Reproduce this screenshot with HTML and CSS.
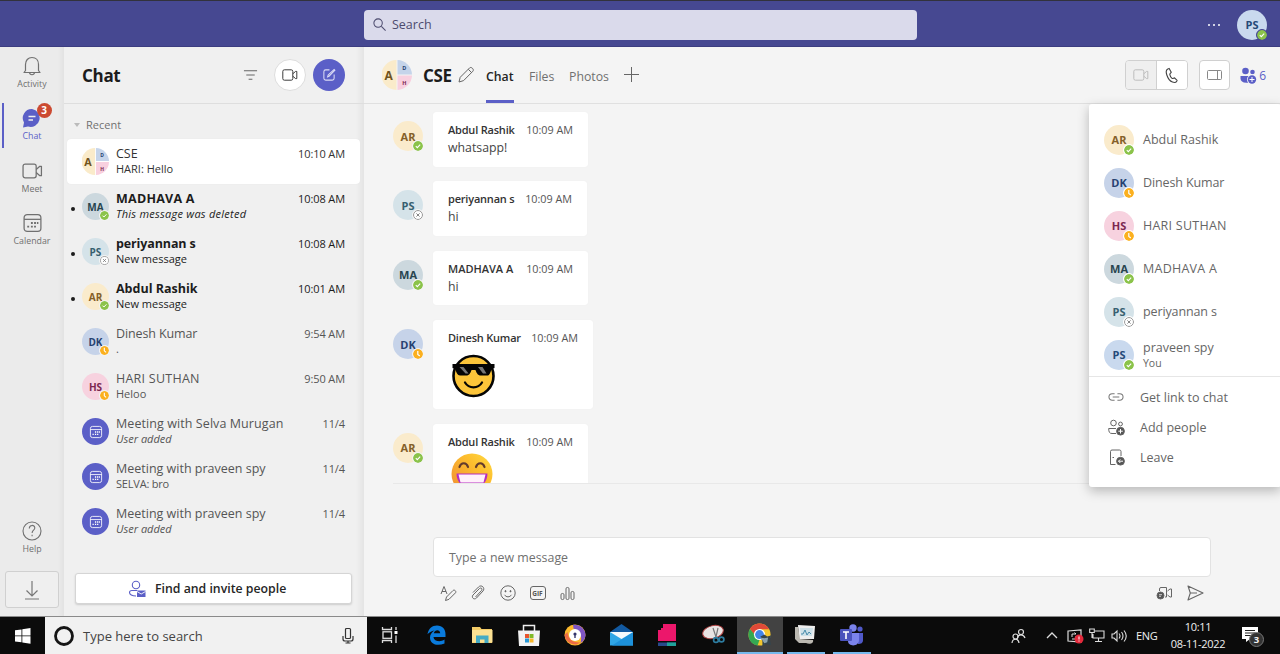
FILE: index.html
```html
<!DOCTYPE html>
<html lang="en">
<head>
<meta charset="utf-8">
<title>CSE | Chat</title>
<link rel="stylesheet" href="styles.css">
</head>
<body>
<svg class="defs" width="0" height="0" aria-hidden="true">
  <symbol id="calendar" viewBox="0 0 20 20"><rect x="2" y="2" width="16" height="16" rx="3" fill="none" stroke="currentColor" stroke-width="1.2"/><path d="M2 6.500h16" stroke="currentColor" stroke-width="1.2"/><path d="M8.500 10h1.800M11.500 10h1.800M14.200 10h1.400M5 13.500h1.800M8.500 13.500h1.800M11.500 13.500h1.800" stroke="currentColor" stroke-width="1.800"/></symbol>
  <symbol id="video" viewBox="0 0 20 20"><rect x="1" y="3.500" width="12.500" height="13" rx="2" fill="none" stroke="currentColor" stroke-width="1.200"/><path d="M13.500 8.500L17 5.500h1.500v9H17l-3.500-3" fill="none" stroke="currentColor" stroke-width="1.200" stroke-linejoin="round"/></symbol>
  <symbol id="ok" viewBox="0 0 10 10"><circle cx="5" cy="5" r="5" fill="#8bc34a"/><path d="M2.800 5.200l1.500 1.500 2.900-3" fill="none" stroke="#fff" stroke-width="1.100"/></symbol>
  <symbol id="away" viewBox="0 0 10 10"><circle cx="5" cy="5" r="5" fill="#fbb01f"/><path d="M4.800 2v3.400l2 1.600" fill="none" stroke="#fff" stroke-width="1.200"/></symbol>
  <symbol id="off" viewBox="0 0 10 10"><circle cx="5" cy="5" r="4.500" fill="#fff" stroke="#858585" stroke-width=".9"/><path d="M3.400 3.400l3.200 3.200M6.600 3.400L3.400 6.600" stroke="#777" stroke-width=".9"/></symbol>
</svg>

<header class="titlebar">
  <div class="search"><svg width="15" height="15" viewBox="0 0 16 16" fill="none" stroke="#4c4b6e" stroke-width="1.100"><circle cx="6.500" cy="6.500" r="4.500"/><path d="M10 10l4.500 4.500"/></svg><span>Search</span></div>
  <div class="title-right"><span class="dots"><i></i><i></i><i></i></span><span class="av me big">PS<svg class="st dark"><use href="#ok"/></svg></span></div>
</header>

<div class="app">
  <nav class="rail">
    <div class="rail-item"><svg width="22" height="22" viewBox="0 0 22 22" fill="none" stroke="currentColor" stroke-width="1.200" stroke-linejoin="round"><path d="M4.500 15.500V9.500C4.500 5.500 7 2.500 11 2.500s6.500 3 6.500 7v6l1.500 2H3z"/><path d="M8.500 17.500c.3 3 4.700 3 5 0"/></svg><span>Activity</span></div>
    <div class="rail-item on"><svg width="22" height="22" viewBox="0 0 22 22"><path d="M11 2a9 9 0 1 1-4 17.500L2 20.500l1-5A9 9 0 0 1 11 2z" fill="#5b5fc7"/><path d="M7.500 9.500h7M7.500 13h4.500" stroke="#eee" stroke-width="1.300"/></svg><span>Chat</span><b class="badge">3</b></div>
    <div class="rail-item"><svg width="21" height="21"><use href="#video"/></svg><span>Meet</span></div>
    <div class="rail-item"><svg width="21" height="21"><use href="#calendar"/></svg><span>Calendar</span></div>
    <div class="rail-item help"><svg width="22" height="22" viewBox="0 0 22 22" fill="none" stroke="currentColor" stroke-width="1.100"><circle cx="11" cy="11" r="9"/><path d="M8.300 8.500c0-4 5.500-4 5.500-.6 0 2.300-2.700 2.300-2.700 5M11.100 14.700v1.500"/></svg><span>Help</span></div>
    <div class="download"><svg width="20" height="22" viewBox="0 0 20 22" fill="none" stroke="#777" stroke-width="1.200"><path d="M10 2v15M4.500 11.500L10 17l5.500-5.500M3 20h14"/></svg></div>
  </nav>

  <aside class="list">
    <div class="list-head"><h1>Chat</h1>
      <svg class="filter" width="15" height="14" viewBox="0 0 16 14" stroke="#666" stroke-width="1.100"><path d="M1 2.500h14M3.500 7h9M6 11.500h4"/></svg>
      <span class="round white"><svg width="16" height="16"><use href="#video"/></svg></span>
      <span class="round purple"><svg width="14" height="14" viewBox="0 0 15 15" fill="none" stroke="#dcdcf5" stroke-width="1.100"><path d="M8 2H4Q2 2 2 4v7q0 2 2 2h7q2 0 2-2V7M6 9.500l.6-2L13 1.500l.8.8-6.300 6.500z"/></svg></span>
    </div>
    <div class="recent"><svg width="6" height="4" viewBox="0 0 6 4"><path d="M0 0h6L3 4z" fill="#bbb"/></svg>Recent</div>
    <div class="rows">
      <div class="row sel"><svg class="gav" viewBox="0 0 30 30"><path d="M14.500 0a15 15 0 0 0 0 30z" fill="#faebca"/><path d="M15.500 0A15 15 0 0 1 30 14.500H15.500z" fill="#c5d4ea"/><path d="M15.500 15.500H30A15 15 0 0 1 15.500 30z" fill="#f8d0df"/><text x="2.500" y="19.500" class="ga">A</text><text x="20.300" y="10" class="gd">D</text><text x="20.300" y="25" class="gh">H</text></svg><div class="rt"><p><span class="nm">CSE</span><time>10:10 AM</time></p><p class="sub">HARI: Hello</p></div></div>
      <div class="row unread"><span class="av ma">MA<svg class="st"><use href="#ok"/></svg></span><div class="rt"><p><span class="nm wide">MADHAVA A</span><time>10:08 AM</time></p><p class="sub"><em class="deleted">This message was deleted</em></p></div></div>
      <div class="row unread"><span class="av pe">PS<svg class="st"><use href="#off"/></svg></span><div class="rt"><p><span class="nm tight">periyannan s</span><time>10:08 AM</time></p><p class="sub">New message</p></div></div>
      <div class="row unread"><span class="av ar">AR<svg class="st"><use href="#ok"/></svg></span><div class="rt"><p><span class="nm">Abdul Rashik</span><time>10:01 AM</time></p><p class="sub">New message</p></div></div>
      <div class="row"><span class="av dk">DK<svg class="st"><use href="#away"/></svg></span><div class="rt"><p><span class="nm tight">Dinesh Kumar</span><time>9:54 AM</time></p><p class="sub">.</p></div></div>
      <div class="row"><span class="av hs">HS<svg class="st"><use href="#away"/></svg></span><div class="rt"><p><span class="nm wide">HARI SUTHAN</span><time>9:50 AM</time></p><p class="sub">Heloo</p></div></div>
      <div class="row"><span class="av cal"><svg width="14" height="14"><use href="#calendar"/></svg></span><div class="rt"><p><span class="nm meet">Meeting with Selva Murugan</span><time>11/4</time></p><p class="sub"><em>User added</em></p></div></div>
      <div class="row"><span class="av cal"><svg width="14" height="14"><use href="#calendar"/></svg></span><div class="rt"><p><span class="nm">Meeting with praveen spy</span><time>11/4</time></p><p class="sub selva">SELVA: bro</p></div></div>
      <div class="row"><span class="av cal"><svg width="14" height="14"><use href="#calendar"/></svg></span><div class="rt"><p><span class="nm">Meeting with praveen spy</span><time>11/4</time></p><p class="sub"><em>User added</em></p></div></div>
    </div>
    <div class="invite"><svg width="18" height="18" viewBox="0 0 18 18"><circle cx="8" cy="5" r="3.700" fill="none" stroke="#5b5fc7" stroke-width="1.100"/><path d="M8 16C4 16 1.500 14.500 1.500 12.500S2.500 10.500 4 10.500h5" fill="none" stroke="#5b5fc7" stroke-width="1.100"/><path d="M9 10.500h8.500V17H9z" fill="#5b5fc7"/><path d="M9 11.500l4.200 2.500 4.300-2.500" fill="none" stroke="#fff" stroke-width=".9"/></svg><span>Find and invite people</span></div>
  </aside>

  <main class="main">
    <div class="main-head">
      <svg class="gav" viewBox="0 0 30 30"><path d="M14.500 0a15 15 0 0 0 0 30z" fill="#faebca"/><path d="M15.500 0A15 15 0 0 1 30 14.500H15.500z" fill="#c5d4ea"/><path d="M15.500 15.500H30A15 15 0 0 1 15.500 30z" fill="#f8d0df"/><text x="2.500" y="19.500" class="ga">A</text><text x="20.300" y="10" class="gd">D</text><text x="20.300" y="25" class="gh">H</text></svg>
      <h2>CSE</h2>
      <svg class="pencil" width="18" height="18" viewBox="0 0 18 18" fill="none" stroke="#666" stroke-linejoin="round"><path d="M2 16l1.200-4.700 9.400-9.400c1.600-1.500 4.900 1.500 3.300 3.300l-9.300 9.400zM11.300 3.300l3.400 3.400"/></svg>
      <span class="tab on">Chat</span><span class="tab files">Files</span><span class="tab photos">Photos</span>
      <svg class="add" width="15" height="15" viewBox="0 0 15 15" stroke="#666"><path d="M7.500 0v15M0 7.500h15"/></svg>
      <div class="tools">
        <span class="seg"><span class="dis"><svg width="16" height="16"><use href="#video"/></svg></span><span><svg width="16" height="17" viewBox="0 0 17 18" fill="none" stroke="#444" stroke-width="1.200" stroke-linejoin="round"><path d="M5.500 1.500L4 2C2 3 2 5.500 3 8.500s3 6.500 6 7.500c2 .8 3.800.4 4.700-1.200l.2-.7-2.700-2.600c-1.200.2-1.700 1.100-2.700.5C7.300 11 6.500 9.500 6.200 8c-.2-1.200 1-1.500 1.500-2.500z"/></svg></span></span>
        <span class="btn"><svg width="17" height="12" viewBox="0 0 17 12" fill="none" stroke="#888"><rect x="1.500" y="1.500" width="14" height="9" rx="1"/><path d="M11.500 1.500v9"/></svg></span>
        <span class="people"><svg width="17" height="17" viewBox="0 0 17 17" fill="#5b5fc7"><circle cx="5.500" cy="4" r="3.300"/><circle cx="12.500" cy="5" r="2.300"/><path d="M.5 9h9v6.500c-6 1-9-.8-9-4z"/><circle cx="12" cy="12.500" r="5" fill="#f5f5f5"/><circle cx="12" cy="12.500" r="4.200"/><path d="M12 10v5M9.500 12.500h5" stroke="#fff"/></svg>6</span>
      </div>
    </div>
    <div class="thread">
      <div class="msg"><span class="av big ar">AR<svg class="st"><use href="#ok"/></svg></span><div class="bub w155"><p><b>Abdul Rashik</b><time>10:09 AM</time></p><p class="tx">whatsapp!</p></div></div>
      <div class="msg"><span class="av big pe">PS<svg class="st"><use href="#off"/></svg></span><div class="bub w154"><p><b>periyannan s</b><time>10:09 AM</time></p><p class="tx">hi</p></div></div>
      <div class="msg"><span class="av big ma">MA<svg class="st"><use href="#ok"/></svg></span><div class="bub w155"><p><b class="caps">MADHAVA A</b><time>10:09 AM</time></p><p class="tx">hi</p></div></div>
      <div class="msg"><span class="av big dk">DK<svg class="st"><use href="#away"/></svg></span><div class="bub w160 tall"><p><b>Dinesh Kumar</b><time>10:09 AM</time></p>
        <svg class="emo cool" width="46" height="46" viewBox="0 0 46 46"><circle cx="22.500" cy="23" r="20" fill="#fcc53a" stroke="#050505" stroke-width="2.600"/><path d="M1.500 11h42v4l-3 1c-1 4-2.500 6.500-3.500 6.500h-8c-2.500 0-4-4-4.500-5.500h-4C20 18.500 18.500 22.500 16 22.500H9c-2.500 0-4-3-4.500-6.500l-3-1z" fill="#050505"/><path d="M8.500 14h4l5 6.500h-3zM27 14h4.500l4 6.500h-3.500z" fill="#777"/><path d="M14 29.500c4 6.500 13 6.500 17 0" fill="none" stroke="#050505" stroke-width="2.300" stroke-linecap="round"/></svg></div></div>
      <div class="msg"><span class="av big ar">AR<svg class="st"><use href="#ok"/></svg></span><div class="bub w155 tall"><p><b>Abdul Rashik</b><time>10:09 AM</time></p>
        <svg class="emo grin" width="42" height="42" viewBox="0 0 42 42"><defs><linearGradient id="face" x1="0" y1="1" x2="1" y2="0"><stop offset="0" stop-color="#f08a32"/><stop offset=".65" stop-color="#fdbf2e"/><stop offset="1" stop-color="#ffdc44"/></linearGradient></defs><circle cx="21" cy="21" r="20.500" fill="url(#face)"/><path d="M8.500 14c1.500-5 7-5 8.500 0M25 14c1.500-5 7-5 8.500 0" fill="none" stroke="#643b2c" stroke-width="2.200" stroke-linecap="round"/><path d="M5.500 20.500h31c0 20-31 20-31 0z" fill="#b52dc0"/><path d="M7.500 21.500h27l-2 8H9.500z" fill="#fff0fb"/></svg></div></div>
    </div>
    <div class="compose">
      <div class="input">Type a new message</div>
      <div class="cicons">
        <svg width="17" height="17" viewBox="0 0 17 17" fill="none" stroke="#666" stroke-linejoin="round"><path d="M1 9L4 1.500 7 9M2 6.500h4M5.500 15.500l1-3.500 6.500-6.500c1.300-1.200 3.700.7 2.500 2.300L9 14.300z"/></svg>
        <svg width="15" height="16" viewBox="0 0 15 16" fill="none" stroke="#666"><path d="M2 7.500L7.500 2c3-3 7 1 4.500 4l-6.500 7c-2.500 2.300-5.500-.5-3.500-3l6.500-6.500c1.700-1.300 3.300.3 2 2L4.500 12"/></svg>
        <svg width="16" height="16" viewBox="0 0 16 16" fill="none" stroke="#666"><circle cx="8" cy="8" r="7.200"/><path d="M4.500 9.800c1.700 2.700 5.300 2.700 7 0"/><circle cx="5.500" cy="6.200" r=".6" fill="#555"/><circle cx="10.500" cy="6.200" r=".6" fill="#555"/></svg>
        <svg width="16" height="14" viewBox="0 0 16 14"><rect x=".5" y=".5" width="15" height="13" rx="2.500" fill="none" stroke="#666"/><text x="2.200" y="9.700" class="gif">GIF</text></svg>
        <svg width="15" height="15" viewBox="0 0 14 15" fill="none" stroke="#666"><rect x=".5" y="7.500" width="3" height="6" rx="1.300"/><rect x="5.500" y="1.500" width="3" height="12" rx="1.300"/><rect x="10.500" y="5.500" width="3" height="8" rx="1.300"/></svg>
        <svg class="clip" width="17" height="14" viewBox="0 0 17 14" fill="none" stroke="#666"><path d="M3.500 5V3q0-1.500 1.500-1.500h5.500V11H9M11.500 5l2.500-2h1.500v8H14l-2.500-2"/><circle cx="4.500" cy="9.500" r="3.500" fill="#555"/><path d="M3 8.700h3M3 10.300h2" stroke="#eee" stroke-width=".8"/></svg>
        <svg width="17" height="16" viewBox="0 0 17 16" fill="none" stroke="#666" stroke-width="1.100" stroke-linejoin="round"><path d="M1 1l15 7-15 7 2.300-7zM3.300 8H10"/></svg>
      </div>
    </div>
  </main>

  <section class="panel">
    <div class="person"><span class="av big ar">AR<svg class="st"><use href="#ok"/></svg></span><span>Abdul Rashik</span></div>
    <div class="person"><span class="av big dk">DK<svg class="st"><use href="#away"/></svg></span><span class="tight">Dinesh Kumar</span></div>
    <div class="person"><span class="av big hs">HS<svg class="st"><use href="#away"/></svg></span><span class="wide">HARI SUTHAN</span></div>
    <div class="person"><span class="av big ma">MA<svg class="st"><use href="#ok"/></svg></span><span class="wide">MADHAVA A</span></div>
    <div class="person"><span class="av big pe">PS<svg class="st"><use href="#off"/></svg></span><span class="tight">periyannan s</span></div>
    <div class="person"><span class="av big me">PS<svg class="st"><use href="#ok"/></svg></span><span>praveen spy<small>You</small></span></div>
    <div class="actions">
      <div><svg width="16" height="16" viewBox="0 0 17 17" fill="none" stroke="#777" stroke-width="1.100"><path d="M7 5H4.500a3.500 3.500 0 0 0 0 7H7M10 5h2.500a3.500 3.500 0 0 1 0 7H10M5 8.500h7"/></svg><span>Get link to chat</span></div>
      <div><svg width="17" height="17" viewBox="0 0 17 17" fill="none" stroke="#666"><circle cx="5.500" cy="4" r="2.800"/><circle cx="12.500" cy="5" r="1.900"/><path d="M8 14.500H4C1.500 14.500.7 13 .7 9.500H8"/><circle cx="12.500" cy="12.200" r="3.900" fill="#555"/><path d="M12.500 10v4.500M10.300 12.200h4.500" stroke="#fff"/></svg><span>Add people</span></div>
      <div><svg width="17" height="17" viewBox="0 0 17 17" fill="none" stroke="#666"><path d="M7.500 15.500h-5v-13q0-1.500 1.500-1.500h7.500q1.500 0 1.500 1.500V7M4.500 8.500h1.500"/><circle cx="12.500" cy="12.200" r="3.900" fill="#555"/><path d="M15 12.200h-4.500m1.800-1.800l-1.800 1.800 1.800 1.800" stroke="#fff"/></svg><span>Leave</span></div>
    </div>
  </section>
</div>

<footer class="taskbar">
  <div class="start"><svg width="16" height="16" viewBox="0 0 16 16" fill="#fff"><path d="M0 2.300l6.500-.9v6H0zM7.300 1.300L15.500 0v7.400H7.300zM0 8.300h6.500v6L0 13.500zM7.300 8.300h8.200v7.400l-8.200-1.200z"/></svg></div>
  <div class="wsearch"><svg width="20" height="20" viewBox="0 0 20 20"><circle cx="10" cy="10" r="8.500" fill="none" stroke="#151515" stroke-width="2.800"/></svg><span>Type here to search</span><svg width="12" height="18" viewBox="0 0 12 18" fill="none" stroke="#333" stroke-width="1.200"><rect x="3.500" y="1.500" width="5" height="10" rx="1"/><path d="M1 9v3q0 2 2 2h6q2 0 2-2V9M6 14v2M3.500 16h5"/></svg></div>
  <div class="apps">
    <span><svg width="18" height="16" viewBox="0 0 18 16" fill="none" stroke="#ddd" stroke-width="1.300"><path d="M1.500 0v2.500h9V0M1.500 16v-2.500h9V16"/><rect x="2" y="4.800" width="8.500" height="6.500"/><path d="M15 0v3M15 8.500V16"/><path d="M13.500 5.500h3" stroke="#fff" stroke-width="3"/></svg></span>
    <span><svg width="19" height="20" viewBox="0 0 19 20"><path d="M.5 9.200C1.500 3.500 5 .5 10 .5c5.500 0 8.500 4 8.500 8.500V12H6.500c.5 5 7.500 5 11 2.500v4C10.500 21.500 3 19.500 3 12.500 3 9.500 5 7 7.500 5.500 4.500 6 2 7.500.5 9.200zM6.800 8.300h6.400C13 3.800 7.500 4.500 6.800 8.300z" fill="#0a7bdc"/></svg></span>
    <span><svg width="21" height="18" viewBox="0 0 21 18"><path d="M0 1h8l1.500 2H20v14H0z" fill="#f3cc67"/><path d="M0 4h20.500v12.500H0z" fill="#fce193"/><path d="M4 17V9.500h12.500V17h-4v-3.500H8V17z" fill="#45abc5"/></svg></span>
    <span><svg width="22" height="23" viewBox="0 0 22 23"><path d="M5.500 7V1.500h11V7" fill="none" stroke="#eee" stroke-width="1.500"/><path d="M0 6.500h22l-1 15.500H1z" fill="#f2f2f2"/><path d="M7 10h4v4H7z" fill="#e9542d"/><path d="M11.500 10h4v4h-4z" fill="#80b927"/><path d="M7 14.500h4v4H7z" fill="#2797d5"/><path d="M11.500 14.500h4v4h-4z" fill="#f8b729"/></svg></span>
    <span><svg width="22" height="22" viewBox="0 0 22 22"><circle cx="11" cy="11" r="10.500" fill="#fcb92c"/><path d="M9 .7C16 0 22 5 21.500 12c-1 4-3 6-5 7 2-6 0-12-7-14.500z" fill="#8056c4"/><path d="M.5 11c1 6 6 10 12 9.500l4-2C9 19 4 15 3.500 8z" fill="#ed6b46"/><circle cx="11" cy="11" r="6" fill="#fff"/><circle cx="11" cy="10" r="1.600" fill="#34366c"/><path d="M10.300 10h1.400v4h-1.400z" fill="#34366c"/></svg></span>
    <span><svg width="23" height="22" viewBox="0 0 23 22"><path d="M0 8l11.500-8L23 8v13H0z" fill="#1259a0"/><path d="M0 8h23v13.500H0z" fill="#30a6e6"/><path d="M23 8v13.500H2z" fill="#1d91da"/><path d="M0 8h23l-11.500 7z" fill="#f5f9fc"/></svg></span>
    <span><svg width="18" height="23" viewBox="0 0 18 23"><path d="M5 0h13v17H0V6h3V4h2z" fill="#ec176b"/><path d="M0 18.500h18V22H0z" fill="#28498b"/><path d="M9 18.500h9V22H9z" fill="#20a29b"/></svg></span>
    <span><svg width="23" height="22" viewBox="0 0 23 22"><ellipse cx="11" cy="8" rx="10.500" ry="6.300" transform="rotate(-14 11 8)" fill="#e9e4e3" stroke="#b34444" stroke-width="1"/><path d="M11 4l3 9 4 5M16 4l-2 9-3 2" fill="none" stroke="#777" stroke-width="1.200"/><g fill="none" stroke="#2d7ca0" stroke-width="1.700"><circle cx="14" cy="16" r="2.400"/><circle cx="19.500" cy="15.500" r="2.400"/></g></svg></span>
    <span class="act run"><svg width="24" height="24" viewBox="0 0 25 25"><circle cx="12" cy="12" r="11.500" fill="#f4c72d"/><path d="M12 .5c4.500 0 8 2.300 10 6H12L8 14 2 6.300C4 2.700 8 .5 12 .5z" fill="#df4938"/><path d="M2 6.300L8.500 14 12 17.500l-2 6C1 22-1.500 12 2 6.300z" fill="#35a853"/><circle cx="12" cy="12" r="5.800" fill="#fff"/><circle cx="12" cy="12" r="4.600" fill="#4285e8"/><path d="M13 14l4-2 3 2 4-1-1 5 1 5-5-1-4 2v-5z" fill="#35454d"/><path d="M13 15l4 1 4-1-1 5-3 1z" fill="#8aa2ad"/></svg></span>
    <span class="run"><svg width="23" height="22" viewBox="0 0 23 22"><path d="M4 1l17 1-1 13H5z" fill="#eee"/><path d="M6 4h13l-1 8H7z" fill="#cde0e8"/><path d="M7 10h2l2-4 2 5 2-3 2 2" fill="none" stroke="#478baa"/><path d="M1 3h3l2 12 13 1c1 3-3 5-7 3H5L1 15z" fill="#bbb8b1"/></svg></span>
    <span class="run"><svg width="23" height="22" viewBox="0 0 23 22"><circle cx="13" cy="4" r="3.700" fill="#7b83eb"/><circle cx="20" cy="5" r="2.600" fill="#5059c9"/><path d="M17 9h6v7c0 3-2 4-5 4z" fill="#5059c9"/><path d="M8 9h11v7c0 7-11 7-11 1z" fill="#7b83eb"/><rect x="0" y="5" width="12" height="12" rx="1" fill="#4b53bc"/><path d="M3 8h6M6 8v7" stroke="#fff" stroke-width="1.600"/></svg></span>
  </div>
  <div class="tray">
    <svg class="t1" width="15" height="16" viewBox="0 0 15 16" fill="none" stroke="#ddd" stroke-width="1.200"><circle cx="10" cy="4" r="2.500"/><path d="M6.500 10c.3-4 6-4.500 7.500 0"/><circle cx="4.500" cy="8.500" r="2.500"/><path d="M1 15c.5-5 6.500-5 7 0"/></svg>
    <svg class="t2" width="12" height="7" viewBox="0 0 12 7" fill="none" stroke="#ddd" stroke-width="1.300"><path d="M1 6l5-5 5 5"/></svg>
    <svg class="t3" width="17" height="16" viewBox="0 0 17 16"><path d="M1 3l13-1v12L1 13z" fill="none" stroke="#ddd" stroke-width="1.200"/><path d="M5 9V6h4m0 0L7.500 4.500M9 8v3H5" stroke="#ddd" fill="none"/><circle cx="12" cy="11" r="4.500" fill="#e4293b"/><path d="M12 8.500v3M12 12.500v1" stroke="#fff"/></svg>
    <svg class="t4" width="16" height="15" viewBox="0 0 16 15" fill="none" stroke="#ddd" stroke-width="1.100"><path d="M6 3h9v7H4V6M9.500 10v3.500M6 13.500h7M.7 1h4.600v3.500H.7zM3 4.500V10"/></svg>
    <svg class="t5" width="16" height="14" viewBox="0 0 16 14" fill="none" stroke="#ddd" stroke-width="1.100"><path d="M1 5h2l3-3v10L3 9H1zM8 4.500q2 2.500 0 5M10.500 3q3 4 0 8M13 1.500q4.500 5.500 0 11"/></svg>
    <span class="eng">ENG</span>
    <span class="clock"><span>10:11</span><span>08-11-2022</span></span>
    <span class="note"><svg width="17" height="16" viewBox="0 0 17 16"><path d="M0 0h16v12H8l-4 3v-3H0z" fill="#fff"/><path d="M3 3.500h10M3 6h10M3 8.500h6" stroke="#222"/></svg><b>3</b></span>
  </div>
</footer>
</body>
</html>
```
FILE: styles.css
```css
* { box-sizing: border-box; }
body { margin: 0; width: 1280px; height: 654px; overflow: hidden; display: flex; flex-direction: column; font-family: "Open Sans", "Noto Sans", sans-serif; font-size: 12px; color: #555; background: #f4f4f4; }
p, h1, h2 { margin: 0; }
svg { display: block; flex: none; }
.defs { position: absolute; }
.wide { letter-spacing: .25px; }
.tight { letter-spacing: -.12px; }

.titlebar { height: 47px; flex: none; background: #464891; border-top: 1px solid #32323c; border-bottom: 1px solid #3c3d80; display: flex; align-items: center; padding-left: 364px; }
.search { width: 553px; height: 30px; margin-top: 2px; background: #dadaeb; border-radius: 4px; display: flex; align-items: center; gap: 5px; padding-left: 8px; font-size: 12.500px; color: #4c4b6e; }
.title-right { margin-left: auto; margin-top: 2px; display: flex; align-items: center; gap: 17px; padding-right: 13px; }
.dots { display: flex; gap: 3px; }
.dots i { width: 2px; height: 2px; border-radius: 50%; background: #fff; }

.av { position: relative; width: 27px; height: 27px; flex: none; border-radius: 50%; display: flex; align-items: center; justify-content: center; font-size: 10px; font-weight: 700; }
.av.big { width: 30px; height: 30px; font-size: 11px; }
.st { position: absolute; right: -1px; bottom: -1px; width: 11px; height: 11px; border-radius: 50%; border: 1px solid #f4f4f4; background: #f4f4f4; }
.st.dark { border-color: #464891; background: #464891; }
.big .st { right: -1px; bottom: -1px; width: 12px; height: 12px; }
.ar { background: #faebcc; color: #856029; }
.dk { background: #c6d3e9; color: #264271; }
.hs { background: #f7d2df; color: #7c2850; }
.ma { background: #ccd8de; color: #28454f; }
.pe { background: #d5e3e9; color: #386070; }
.me { background: #c9d9ee; color: #264a78; }
.cal { background: #5b5fc7; color: #fff; }
.gav text { font-weight: 700; }
.ga { font-size: 12px; fill: #70531c; }
.gd { font-size: 5.500px; fill: #264271; }
.gh { font-size: 5.500px; fill: #7c2850; }

.app { position: relative; flex: 1; min-height: 0; display: flex; }
.rail { width: 64px; background: linear-gradient(90deg, #ebebeb 58px, #e2e2e2); display: flex; flex-direction: column; padding-top: 2px; }
.rail-item { position: relative; height: 52.300px; display: flex; flex-direction: column; align-items: center; padding-top: 6px; color: #707070; }
.rail-item svg { height: 22px; }
.rail-item span { font-size: 8.800px; line-height: 12px; margin-top: 1px; }
.rail-item.on { color: #5b5fc7; }
.rail-item.on::before { content: ""; position: absolute; left: 2px; top: 2px; width: 2px; height: 45px; background: #5b5fc7; }
.badge { position: absolute; left: 36.500px; top: 2px; width: 15px; height: 15px; border-radius: 50%; background: #cc4a31; color: #fff; font-size: 10px; line-height: 15px; text-align: center; }
.help { margin-top: auto; height: 57px; }
.download { width: 54px; height: 37px; margin: 0 0 8px 5px; border: 1px solid #d0d0d0; border-radius: 3px; background: #efefef; display: flex; align-items: center; justify-content: center; }

.list { width: 300px; background: linear-gradient(90deg, #f0f0f0 292px, #e4e4e4); display: flex; flex-direction: column; }
.list-head { height: 57px; border-bottom: 1px solid #dedede; display: flex; align-items: center; padding: 0 19px 0 18px; }
.list-head h1 { font-size: 17px; color: #1c1c1c; letter-spacing: -.3px; }
.filter { margin-left: auto; margin-right: 16px; }
.round { border-radius: 50%; display: flex; align-items: center; justify-content: center; }
.white { width: 32px; height: 32px; background: #fff; border: 1px solid #ddd; color: #333; margin-right: 7px; }
.purple { width: 32px; height: 32px; background: #5b5fc7; }
.recent { height: 35px; padding: 6px 0 0 10px; display: flex; align-items: center; gap: 6px; font-size: 11px; color: #707070; }
.row { position: relative; height: 45px; margin: 0 4px 0 3px; padding: 0 15px 0 15px; display: flex; align-items: center; gap: 7px; border-radius: 4px; }
.sel { background: #fff; box-shadow: 0 0 1px #ddd; color: #333; }
.row .gav { width: 27px; height: 27px; }
.rt { flex: 1; margin-top: -1px; }
.rt p { display: flex; justify-content: space-between; line-height: 16px; }
.rt .nm { font-size: 12.500px; }
.rt .nm.meet { letter-spacing: .08px; }
.rt time { font-size: 11px; letter-spacing: -.1px; }
.rt .sub { font-size: 11px; line-height: 14px; }
.rt .deleted { letter-spacing: .25px; }
.rt .selva { letter-spacing: -.2px; }
.unread { color: #1c1c1c; }
.unread .nm { font-weight: 700; }
.unread::before { content: ""; position: absolute; left: 4px; top: 23px; width: 4px; height: 4px; border-radius: 50%; background: #1c1c1c; }
.invite { margin: auto 12px 12px 11px; height: 31px; background: #fff; border: 1px solid #d5d5d5; border-radius: 3px; box-shadow: 0 1px 2px #ccc; display: flex; align-items: center; gap: 9px; padding-left: 52px; font-size: 12.300px; font-weight: 600; color: #252525; }

.main { flex: 1; min-width: 0; display: flex; flex-direction: column; }
.main-head { height: 57px; flex: none; border-bottom: 1px solid #e0e0e0; display: flex; align-items: center; padding: 0 14px 0 18px; }
.main-head .gav { width: 30px; height: 30px; }
.main-head h2 { font-size: 17px; letter-spacing: -.4px; color: #1c1c1c; margin-left: 11px; width: 34px; }
.pencil { margin-right: 11px; }
.tab { font-size: 12.300px; height: 56px; line-height: 59px; border-bottom: 3px solid transparent; color: #707070; }
.tab.on { border-color: #5b5fc7; color: #252525; font-weight: 600; width: 28px; margin-right: 15px; }
.files { width: 25px; margin-right: 15px; }
.photos { width: 41px; margin-right: 14px; }
.add { margin-top: -1px; }
.tools { margin-left: auto; display: flex; align-items: center; }
.seg { width: 63px; height: 30px; display: flex; border: 1px solid #d0d0d0; border-radius: 4px; overflow: hidden; margin-right: 11px; }
.seg span { flex: 1; background: #fff; display: flex; align-items: center; justify-content: center; }
.seg .dis { background: #efefef; border-right: 1px solid #d0d0d0; color: #bbb; }
.btn { width: 31px; height: 30px; background: #fff; border: 1px solid #d0d0d0; border-radius: 4px; display: flex; align-items: center; justify-content: center; margin-right: 10px; }
.people { display: flex; align-items: center; gap: 2px; color: #5b5fc7; font-size: 12px; }

.thread { height: 380px; margin-left: 29px; padding-top: 8px; border-bottom: 1px solid #e8e8e8; overflow: hidden; }
.msg { display: flex; gap: 10px; margin-bottom: 14.800px; }
.msg .av { margin-top: 9px; }
.bub { height: 54.600px; background: #fff; border-radius: 3px; padding: 9px 15px; box-shadow: 0 0 1px #e4e4e4; }
.bub.tall { height: 89px; }
.w155 { width: 155px; }
.w154 { width: 154px; }
.w160 { width: 160px; }
.bub p { display: flex; justify-content: space-between; white-space: nowrap; line-height: 18px; }
.bub b { font-size: 11px; font-weight: 600; letter-spacing: -.2px; color: #333; }
.bub b.caps { letter-spacing: 0; }
.bub time { font-size: 10.800px; letter-spacing: 0; }
.bub .tx { font-size: 12.300px; color: #444; }
.cool { margin: 6px 0 0 3px; }
.grin { margin: 2px 0 0 3px; }
.compose { padding: 53px 69px 0 69px; }
.input { height: 40px; background: #fff; border: 1px solid #e2e2e2; border-radius: 4px; padding-left: 15px; line-height: 39px; font-size: 12.400px; color: #707070; }
.cicons { height: 32px; display: flex; align-items: center; gap: 14px; padding: 0 7px 0 7px; }
.clip { margin-left: auto; }
.gif { font-size: 6.500px; font-weight: 700; fill: #555; }

.panel { position: absolute; left: 1089px; top: 57px; width: 192px; height: 383px; background: #fff; border-radius: 3px; box-shadow: 0 4px 12px rgba(0,0,0,.25); padding-top: 14px; font-size: 12.500px; color: #666; }
.person { height: 43px; display: flex; align-items: center; gap: 9px; padding-left: 15px; }
.person > span:last-child { line-height: 16px; }
.panel .st { background: #fff; border-color: #fff; }
.person small { display: block; font-size: 10.500px; line-height: 14px; }
.actions { border-top: 1px solid #e6e6e6; padding-top: 5px; }
.actions div { height: 30px; display: flex; align-items: center; gap: 15px; padding-left: 19px; }
.actions div:first-child { gap: 16px; }

.taskbar { height: 38px; flex: none; background: #0b0b0b; border-top: 1px solid #8a8a8a; display: flex; color: #f0f0f0; }
.start { width: 45px; display: flex; align-items: center; justify-content: center; }
.wsearch { width: 322px; background: #f1f1f1; display: flex; align-items: center; gap: 9px; padding: 0 13px 0 9px; font-size: 13px; color: #444; }
.wsearch span { flex: 1; }
.apps { display: flex; }
.apps span { width: 46.200px; display: flex; align-items: center; justify-content: center; border-bottom: 2px solid transparent; padding-top: 1px; }
.apps .run { position: relative; }
.apps .run::after { content: ""; position: absolute; left: 4px; right: 4px; bottom: -2px; height: 2px; background: #76b9ed; }
.apps .act { background: #424242; }
.apps .act::after { left: 0; right: 0; }
.tray { margin-left: auto; display: flex; align-items: center; padding-right: 15px; font-size: 11.500px; }
.t1 { margin-right: 20px; }
.t2 { margin-right: 9px; }
.t3 { margin-right: 5px; }
.t4 { margin-right: 6px; }
.t5 { margin-right: 9px; }
.eng { width: 34px; letter-spacing: -.3px; font-size: 11px; }
.clock { display: flex; flex-direction: column; align-items: center; width: 56px; line-height: 17px; font-size: 11px; letter-spacing: -.3px; margin: -2px 16px 0 0; }
.note { position: relative; width: 23px; height: 18px; }
.note b { position: absolute; left: 7px; top: 5px; width: 15px; height: 15px; border-radius: 50%; background: #333; border: 1px solid #777; text-align: center; font-size: 9.500px; line-height: 13px; }
```
